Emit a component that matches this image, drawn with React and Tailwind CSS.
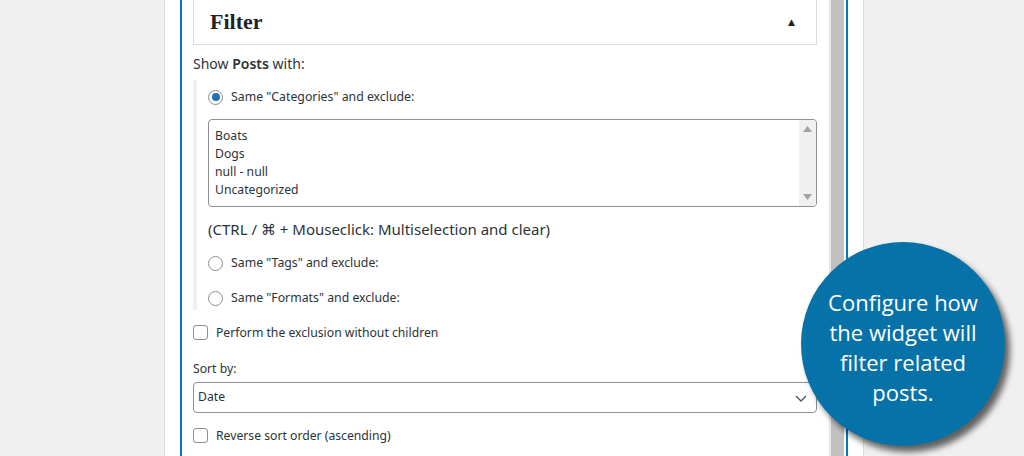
import React from 'react';

const font = { fontFamily: '"Noto Sans", "DejaVu Sans", sans-serif' };

const Radio = ({ checked, label }) => (
    <label className="flex items-center gap-[8px] text-[12.3px] text-[#2c3338]">
        <span className="w-[15px] h-[15px] rounded-full border border-[#8c8f94] bg-white flex items-center justify-center">
            {checked && <span className="w-[8px] h-[8px] rounded-full bg-[#2271b1]" />}
        </span>
        {label}
    </label>
);

const Checkbox = ({ label }) => (
    <label className="flex items-center gap-[8px] text-[12.2px] text-[#2c3338]">
        <span className="w-[15px] h-[15px] rounded-[3px] border border-[#8c8f94] bg-white" />
        {label}
    </label>
);

const categories = ['Boats', 'Dogs', 'null - null', 'Uncategorized'];

const App = () => {
    return (
        <div className="relative h-[456px] w-[1024px] overflow-hidden bg-[#f0f0f0] flex" style={font}>
            <div className="w-[164px] shrink-0" />
            <div className="w-[700px] shrink-0 bg-white border-x border-[#dcdcde] pl-[15px] flex">
                <div className="w-[668px] border-x-2 border-[#007cba] flex pl-[11px]">
                    <div className="w-[624px] shrink-0">
                        {/* Filter header */}
                        <div className="h-[45px] border-x border-b border-[#dcdcde] flex items-center justify-between pl-[16px] pr-[21px] pb-[2px]">
                            <h2
                                className="text-[22px] font-bold text-[#1d2327]"
                                style={{ fontFamily: '"Liberation Serif", "DejaVu Serif", serif' }}
                            >
                                Filter
                            </h2>
                            <span className="text-[9px] text-[#1d2327] leading-none">▲</span>
                        </div>

                        <p className="mt-[8px] h-[20px] flex items-center text-[14px] text-[#2c3338]">
                            Show&nbsp;<b className="font-semibold">Posts</b>&nbsp;with:
                        </p>

                        {/* Taxonomy options */}
                        <div className="mt-[7px] border-l-4 border-[#f0f0f0] pl-[11px] h-[230px]">
                            <div className="h-[34px] flex items-center">
                                <Radio checked label={'Same "Categories" and exclude:'} />
                            </div>
                            <div className="mt-[5px] h-[88px] border border-[#8c8f94] rounded-[4px] flex overflow-hidden">
                                <ul className="flex-1 pt-[7px] pl-[6px] text-[12.2px] leading-[18px] text-[#2c3338]">
                                    {categories.map((c) => (
                                        <li key={c}>{c}</li>
                                    ))}
                                </ul>
                                <div className="w-[17px] bg-[#f0f0f0] flex flex-col items-center justify-between py-[6px]">
                                    <svg width="9" height="6" viewBox="0 0 9 6"><path d="M4.5 0L9 6H0z" fill="#a3a3a3" /></svg>
                                    <svg width="9" height="6" viewBox="0 0 9 6"><path d="M0 0h9L4.5 6z" fill="#a3a3a3" /></svg>
                                </div>
                            </div>
                            <div className="h-[44px] flex items-center text-[15px] text-[#2c3338]">
                                (CTRL / ⌘ + Mouseclick: Multiselection and clear)
                            </div>
                            <div className="h-[24px] flex items-center">
                                <Radio label={'Same "Tags" and exclude:'} />
                            </div>
                            <div className="mt-[11px] h-[24px] flex items-center">
                                <Radio label={'Same "Formats" and exclude:'} />
                            </div>
                        </div>

                        <div className="mt-[10px] h-[26px] flex items-center">
                            <Checkbox label="Perform the exclusion without children" />
                        </div>

                        <p className="mt-[13px] h-[20px] flex items-center text-[12.2px] text-[#2c3338]">Sort by:</p>

                        <div className="mt-[3px] h-[31px] border border-[#8c8f94] rounded-[4px] flex items-center justify-between pl-[4px] pr-[8px] text-[12.2px] text-[#2c3338]">
                            <span>Date</span>
                            <svg width="14" height="14" viewBox="0 0 14 14" fill="none">
                                <path d="M2 5l5 5 5-5" stroke="#50575e" strokeWidth="1.4" />
                            </svg>
                        </div>

                        <div className="mt-[11px] h-[24px] flex items-center">
                            <Checkbox label="Reverse sort order (ascending)" />
                        </div>
                    </div>

                    {/* Panel scrollbar */}
                    <div className="ml-[12px] flex h-full">
                        <div className="w-[2px] bg-[#e6e6e6]" />
                        <div className="w-[13px] bg-[#c1c1c1]" />
                        <div className="w-[2px] bg-white" />
                    </div>
                </div>
            </div>

            {/* Callout */}
            <div className="absolute left-[801px] top-[242px] w-[204px] h-[204px] rounded-full bg-[#0672a8] shadow-[5px_6px_6px_rgba(0,0,0,0.6)] flex items-center justify-center">
                <p
                    className="text-white text-[22px] leading-[30px] text-center pt-[6px]"
                    style={{ fontFamily: '"Open Sans", "Noto Sans", sans-serif' }}
                >
                    Configure how
                    <br />
                    the widget will
                    <br />
                    filter related
                    <br />
                    posts.
                </p>
            </div>
        </div>
    );
};

export default App;
